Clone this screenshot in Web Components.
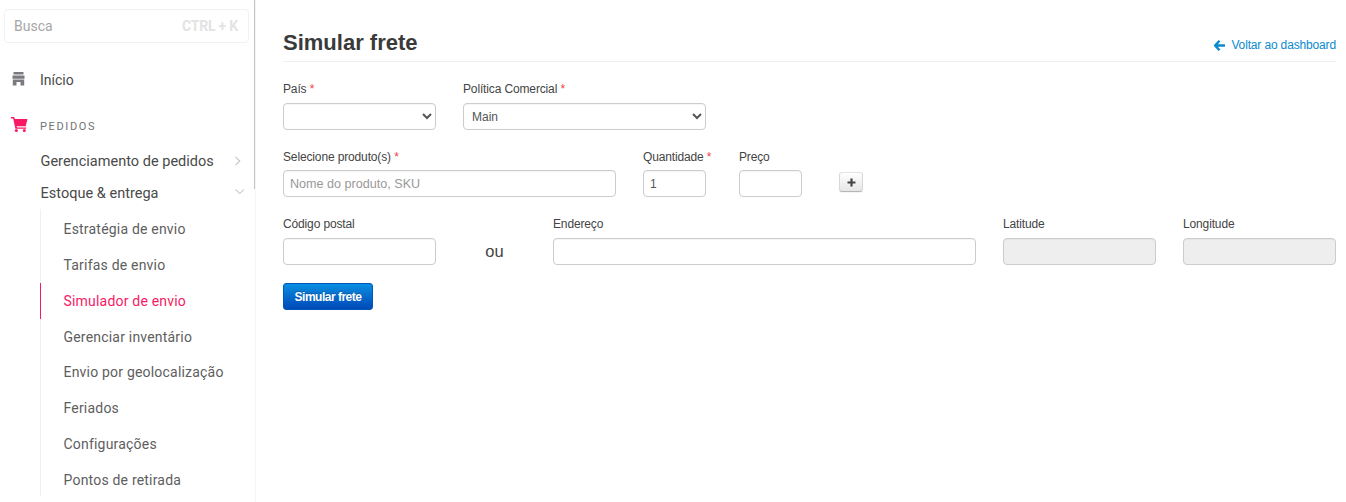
<!DOCTYPE html>
<html lang="pt-BR"><head><meta charset="utf-8"><title>Simular frete</title>
<style>
html,body{margin:0;padding:0;height:502px;overflow:hidden;background:#fff}
body{display:flex;font-family:"Liberation Sans",Arial,sans-serif}
</style></head><body>
<app-sidebar>
  <side-search></side-search>
  <side-top label="Início"><svg slot="icon" width="15" height="14" viewBox="0 0 15 14"><path fill="#79797f" d="M2.500 0h10v2.500h-10zM1.500 3.500h12V6.800h-12zM1.800 7.600h3.700v5.900H1.800zM9.500 7.600h3.700v5.900H9.500zM5.500 7.600h4v2.400h-4z"/></svg></side-top>
  <side-section label="PEDIDOS"><svg slot="icon" width="17" height="15" viewBox="0 0 17 15"><path fill="#f71963" d="M0 0h3.200l.7 2H16.500l-1.800 7.200H5.600l.4 1.300h9.200v1.300H4.400L2.200 1.400H0z"/><circle cx="5.300" cy="13.500" r="1.500" fill="#f71963"/><circle cx="13.300" cy="13.500" r="1.500" fill="#f71963"/></svg></side-section>
  <side-group class="first" label="Gerenciamento de pedidos" state="closed"></side-group>
  <side-group label="Estoque &amp; entrega" state="open"></side-group>
  <side-sub>
    <side-link>Estratégia de envio</side-link>
    <side-link>Tarifas de envio</side-link>
    <side-link active>Simulador de envio</side-link>
    <side-link>Gerenciar inventário</side-link>
    <side-link>Envio por geolocalização</side-link>
    <side-link>Feriados</side-link>
    <side-link>Configurações</side-link>
    <side-link>Pontos de retirada</side-link>
  </side-sub>
</app-sidebar>
<app-main>
  <page-head title-text="Simular frete" link="Voltar ao dashboard"></page-head>
  <form-row style="--mt:18px;--mb:5px">
    <form-field label="País" required w="153" kind="select"></form-field>
    <form-field label="Política Comercial" required w="243" kind="select" value="Main"></form-field>
  </form-row>
  <form-row style="--mt:18px;--mb:4px">
    <form-field label="Selecione produto(s)" required w="333" kind="input" placeholder="Nome do produto, SKU"></form-field>
    <form-field label="Quantidade" required w="63" kind="input" value="1"></form-field>
    <form-field style="margin-left:6px" label="Preço" w="63" kind="input"></form-field>
    <plus-button></plus-button>
  </form-row>
  <form-row style="--mt:18px;--mb:5px">
    <form-field label="Código postal" w="153" kind="input"></form-field>
    <or-text>ou</or-text>
    <form-field label="Endereço" w="423" kind="input"></form-field>
    <form-field label="Latitude" w="153" kind="input" disabled></form-field>
    <form-field label="Longitude" w="153" kind="input" disabled></form-field>
  </form-row>
  <primary-button>Simular frete</primary-button>
</app-main>
<script>
function def(name, html){
  customElements.define(name, class extends HTMLElement{
    connectedCallback(){
      if(this.shadowRoot) return;
      const a={};for(const n of this.getAttributeNames())a[n]=this.getAttribute(n);
      this.attachShadow({mode:'open'}).innerHTML = typeof html==='function'?html(a):html;
    }
  });
}
const roboto='font-family:Roboto,"Liberation Sans",sans-serif;';
def('app-sidebar',`<style>:host{display:block;box-sizing:border-box;width:256px;height:502px;flex:none;padding:9px 6px 0 4px;overflow:hidden;position:relative;background:#fff;border-right:1px solid #f5f5f5;${roboto}}
.thumb{position:absolute;right:-1px;top:0;width:2px;height:189px;background:#c4c4c4}</style><div class="thumb"></div><slot></slot>`);
def('side-search',`<style>:host{display:flex;justify-content:space-between;align-items:center;box-sizing:border-box;height:34px;border:1px solid #f2f2f2;border-radius:4px;padding:0 10px 0 9px;font-size:14px;color:#a6a6a6}
b{font-size:14px;color:#e3e3e3;font-weight:700;letter-spacing:-.2px}</style><span>Busca</span><b>CTRL + K</b>`);
def('side-top',a=>`<style>:host{display:flex;align-items:center;height:20px;margin-top:27px;font-size:14px;color:#4a4a4a}
.i{padding-left:7px;width:29px;display:flex;margin-top:-3px}</style><span class="i"><slot name="icon"></slot></span><span>${a.label}</span>`);
def('side-section',a=>`<style>:host{display:flex;align-items:center;height:20px;margin-top:26px;font-size:11px;letter-spacing:1.650px;color:#727273;font-weight:400}
.i{padding-left:7px;width:29px;display:flex;margin-top:-3px}</style><span class="i"><slot name="icon"></slot></span><span>${a.label}</span>`);
def('side-group',a=>`<style>:host{display:flex;align-items:center;justify-content:space-between;height:32px;padding-left:36.500px;padding-right:5px;font-size:14.500px;color:#4a4a4a;letter-spacing:.02px}
:host(.first){margin-top:9px}</style><span>${a.label}</span>${a.state==='open'?
'<svg width="12" height="12" viewBox="0 0 12 12" style="margin-top:-3px"><path d="M3.500 3.500 7.750 7.500 12 3.500" fill="none" stroke="#d0d0d0" stroke-width="1.100"/></svg>':
'<svg width="12" height="12" viewBox="0 0 12 12"><path d="M3.500 1.800 7.800 6 3.500 10.200" fill="none" stroke="#c4c4c4" stroke-width="1.100"/></svg>'}`);
def('side-sub',`<style>:host{display:block;margin-left:36px;border-left:1px solid #f0f0f0;padding-top:2px;height:285px}</style><slot></slot>`);
def('side-link',a=>`<style>:host{display:flex;align-items:center;height:35.860px;padding-left:22.500px;font-size:14px;letter-spacing:.2px;color:#5e5e5e;margin-left:-1px;border-left:1px solid transparent}
:host([active]){color:#f71963;border-left-color:#f71963}</style><slot></slot>`);
def('app-main',`<style>:host{display:block;flex:1;box-sizing:border-box;padding:0 10px 0 27px;font-size:12px;color:#333;min-width:0}</style><slot></slot>`);
def('page-head',a=>`<style>:host{display:flex;justify-content:space-between;align-items:flex-end;box-sizing:border-box;height:62px;border-bottom:1px solid #eee;padding-bottom:7px}
h1{margin:0 0 -1px;font-size:22px;line-height:24px;font-weight:700;color:#3a3a3a}
a{display:flex;align-items:center;gap:6px;color:#0a8ad0;font-size:12px;line-height:18px;letter-spacing:-.15px;text-decoration:none}</style>
<h1>${a['title-text']}</h1><a href="#"><svg width="11" height="11" viewBox="0 0 11 11"><path d="M5.500.8 1.200 5.500l4.300 4.700M1.500 5.500H11" fill="none" stroke="#0a8ad0" stroke-width="2.400"/></svg>${a.link}</a>`);
def('form-row',`<style>:host{display:flex;gap:27px;margin-top:var(--mt,20px);align-items:flex-start}</style><slot></slot>`);
def('form-field',a=>{
  const w=a.w+'px';
  const ctl=a.kind==='select'
   ?`<select>${a.value?`<option>${a.value}</option>`:'<option></option>'}</select>`
   :`<input ${a.value?`value="${a.value}"`:''} ${a.placeholder?`placeholder="${a.placeholder}"`:''} ${a.disabled!==undefined?'disabled':''}>`;
  return `<style>:host{display:block;width:${w};flex:none}
label{display:block;font-size:12px;line-height:18px;letter-spacing:-.14px;color:#444;margin-bottom:var(--mb,4px);white-space:nowrap}
i{color:#e44;font-style:normal}
input,select{display:block;box-sizing:border-box;width:100%;height:27px;border:1px solid #ccc;border-radius:4px;background:#fff;font:12px "Liberation Sans",Arial,sans-serif;color:#555;margin:0;outline:0;box-shadow:inset 0 1px 1px rgba(0,0,0,.04)}
input{padding:0 6px}select{padding:0 4px}
input::placeholder{color:#999;font-size:12.600px}
input:disabled{background:#eee}</style>
<label>${a.label}${a.required!==undefined?' <i>*</i>':''}</label>${ctl}`});
def('plus-button',`<style>:host{display:flex;align-items:center;justify-content:center;box-sizing:border-box;width:24px;height:20px;margin-top:24px;margin-left:10px;border:1px solid #ccc;border-color:#e2e2e2 #d8d8d8 #b5b5b5;border-radius:3px;background:linear-gradient(#fff,#e6e6e6);box-shadow:0 1px 1px rgba(0,0,0,.05)}
svg{display:block}</style><svg width="9" height="9" viewBox="0 0 9 9"><path d="M4.500.5v8M.5 4.500h8" stroke="#444" stroke-width="2.200"/></svg>`);
def('or-text',`<style>:host{display:block;flex:none;width:63px;text-align:center;font-size:16.500px;line-height:20px;margin-top:26px;color:#444}</style><slot></slot>`);
def('primary-button',`<style>:host{display:inline-flex;align-items:center;justify-content:center;box-sizing:border-box;width:90px;height:27px;margin-top:18px;border:1px solid #0058b8;border-radius:3px;background:linear-gradient(#0a8ee0,#0048b8);color:#fff;font-size:12px;font-weight:700;letter-spacing:-.5px;text-shadow:0 -1px 0 rgba(0,0,0,.2)}</style><slot></slot>`);
</script>
</body></html>
